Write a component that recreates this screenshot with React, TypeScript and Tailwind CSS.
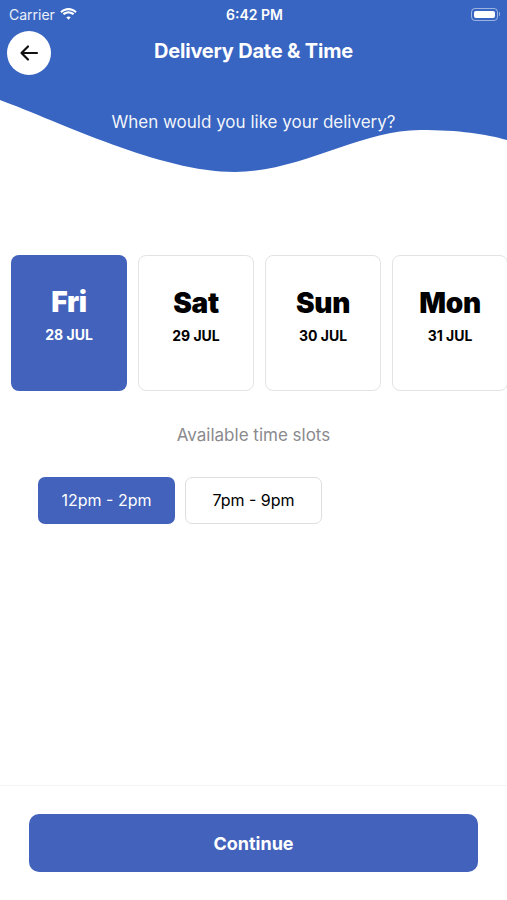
import React, { useState } from "react";

const days = [
  { day: "Fri", date: "28 JUL" },
  { day: "Sat", date: "29 JUL" },
  { day: "Sun", date: "30 JUL" },
  { day: "Mon", date: "31 JUL" },
];

const slots = ["12pm - 2pm", "7pm - 9pm"];

function StatusBar() {
  return (
    <div className="flex h-[28px] items-center justify-between pl-[9px] pr-[7px] text-white">
      <div className="flex w-[120px] items-center gap-[5px] text-[14px] text-white/90">
        <span>Carrier</span>
        <svg width="17" height="12" viewBox="0 0 17 12" fill="white">
          <path d="M8.5 2.2c2.6 0 5 1 6.8 2.7l1.4-1.5C14.5 1.3 11.6 0 8.5 0S2.5 1.3.3 3.4l1.4 1.5C3.5 3.2 5.9 2.2 8.5 2.2z" />
          <path d="M8.5 5.4c1.7 0 3.2.6 4.4 1.7l1.4-1.5C12.8 4.2 10.7 3.3 8.5 3.3S4.2 4.2 2.7 5.6l1.4 1.5c1.2-1.1 2.7-1.7 4.4-1.7z" />
          <path d="M8.5 8.5c.9 0 1.6.3 2.2.8l-2.2 2.4-2.2-2.4c.6-.5 1.3-.8 2.2-.8z" />
        </svg>
      </div>
      <span className="text-[14px] font-semibold">6:42 PM</span>
      <div className="flex w-[120px] justify-end">
        <div className="flex items-center">
          <div className="flex h-[13px] w-[27px] items-center rounded-[4px] border border-white/50 p-[2px]">
            <div className="h-full w-full rounded-[2px] bg-white" />
          </div>
          <div className="ml-[1px] h-[4px] w-[1.5px] rounded-r bg-white/50" />
        </div>
      </div>
    </div>
  );
}

function Header() {
  return (
    <div className="relative h-[176px]">
      <svg
        className="absolute inset-0"
        width="507"
        height="176"
        viewBox="0 0 507 176"
        preserveAspectRatio="none"
      >
        <path
          d="M0 0H507V140C485 134 460 130 420 130C360 130 300 172 235 172C160 172 60 122 0 100Z"
          fill="#3865c1"
        />
      </svg>
      <div className="relative">
        <StatusBar />
        <div className="relative flex h-[46px] items-center justify-center">
          <button className="absolute left-[7px] top-[3px] flex h-[44px] w-[44px] items-center justify-center rounded-full bg-white">
            <svg width="24" height="24" viewBox="0 0 24 24" fill="none" stroke="#111" strokeWidth="2.2" strokeLinecap="round" strokeLinejoin="round">
              <path d="M20 12H4.5M11 5.5 4.5 12l6.5 6.5" />
            </svg>
          </button>
          <h1 className="text-[20px] font-bold tracking-[-0.2px] text-white">
            Delivery Date &amp; Time
          </h1>
        </div>
        <p className="mt-[38px] text-center text-[17px] leading-[20px] text-white/95">
          When would you like your delivery?
        </p>
      </div>
    </div>
  );
}

export default function App() {
  const [selectedDay, setSelectedDay] = useState(0);
  const [selectedSlot, setSelectedSlot] = useState(0);

  return (
    <div
      className="flex h-[900px] w-[507px] flex-col overflow-hidden bg-white"
      style={{ fontFamily: "Inter, 'Liberation Sans', sans-serif" }}
    >
      <Header />

      {/* Day picker */}
      <div className="mt-[79px] flex gap-[11px] pl-[11px]">
        {days.map((d, i) => {
          const active = i === selectedDay;
          return (
            <button
              key={d.day}
              onClick={() => setSelectedDay(i)}
              className={`flex h-[136px] w-[116px] shrink-0 flex-col items-center rounded-[8px] pt-[30px] ${
                active
                  ? "bg-[#4262bb] text-white"
                  : "border border-[#e3e3e3] bg-white text-black"
              }`}
            >
              <span className="text-[28px] leading-[34px] font-black tracking-[-0.3px]">
                {d.day}
              </span>
              <span className="mt-[5px] text-[14px] font-bold">{d.date}</span>
            </button>
          );
        })}
      </div>

      <p className="mt-[32px] text-center text-[17px] text-[#8a8a8e]">
        Available time slots
      </p>

      {/* Time slots */}
      <div className="mt-[28px] flex gap-[10px] pl-[38px]">
        {slots.map((s, i) => {
          const active = i === selectedSlot;
          return (
            <button
              key={s}
              onClick={() => setSelectedSlot(i)}
              className={`flex h-[47px] w-[137px] items-center justify-center rounded-[7px] text-[16px] ${
                active
                  ? "bg-[#4262bb] text-white"
                  : "border border-[#dedede] bg-white text-black"
              }`}
            >
              {s}
            </button>
          );
        })}
      </div>

      <div className="flex-1" />

      {/* Footer */}
      <div className="h-[115px] border-t border-[#f4f4f4] px-[29px] pt-[28px]">
        <button className="h-[58px] w-full rounded-[10px] bg-[#4262bb] text-[18px] font-bold text-white">
          Continue
        </button>
      </div>
    </div>
  );
}
